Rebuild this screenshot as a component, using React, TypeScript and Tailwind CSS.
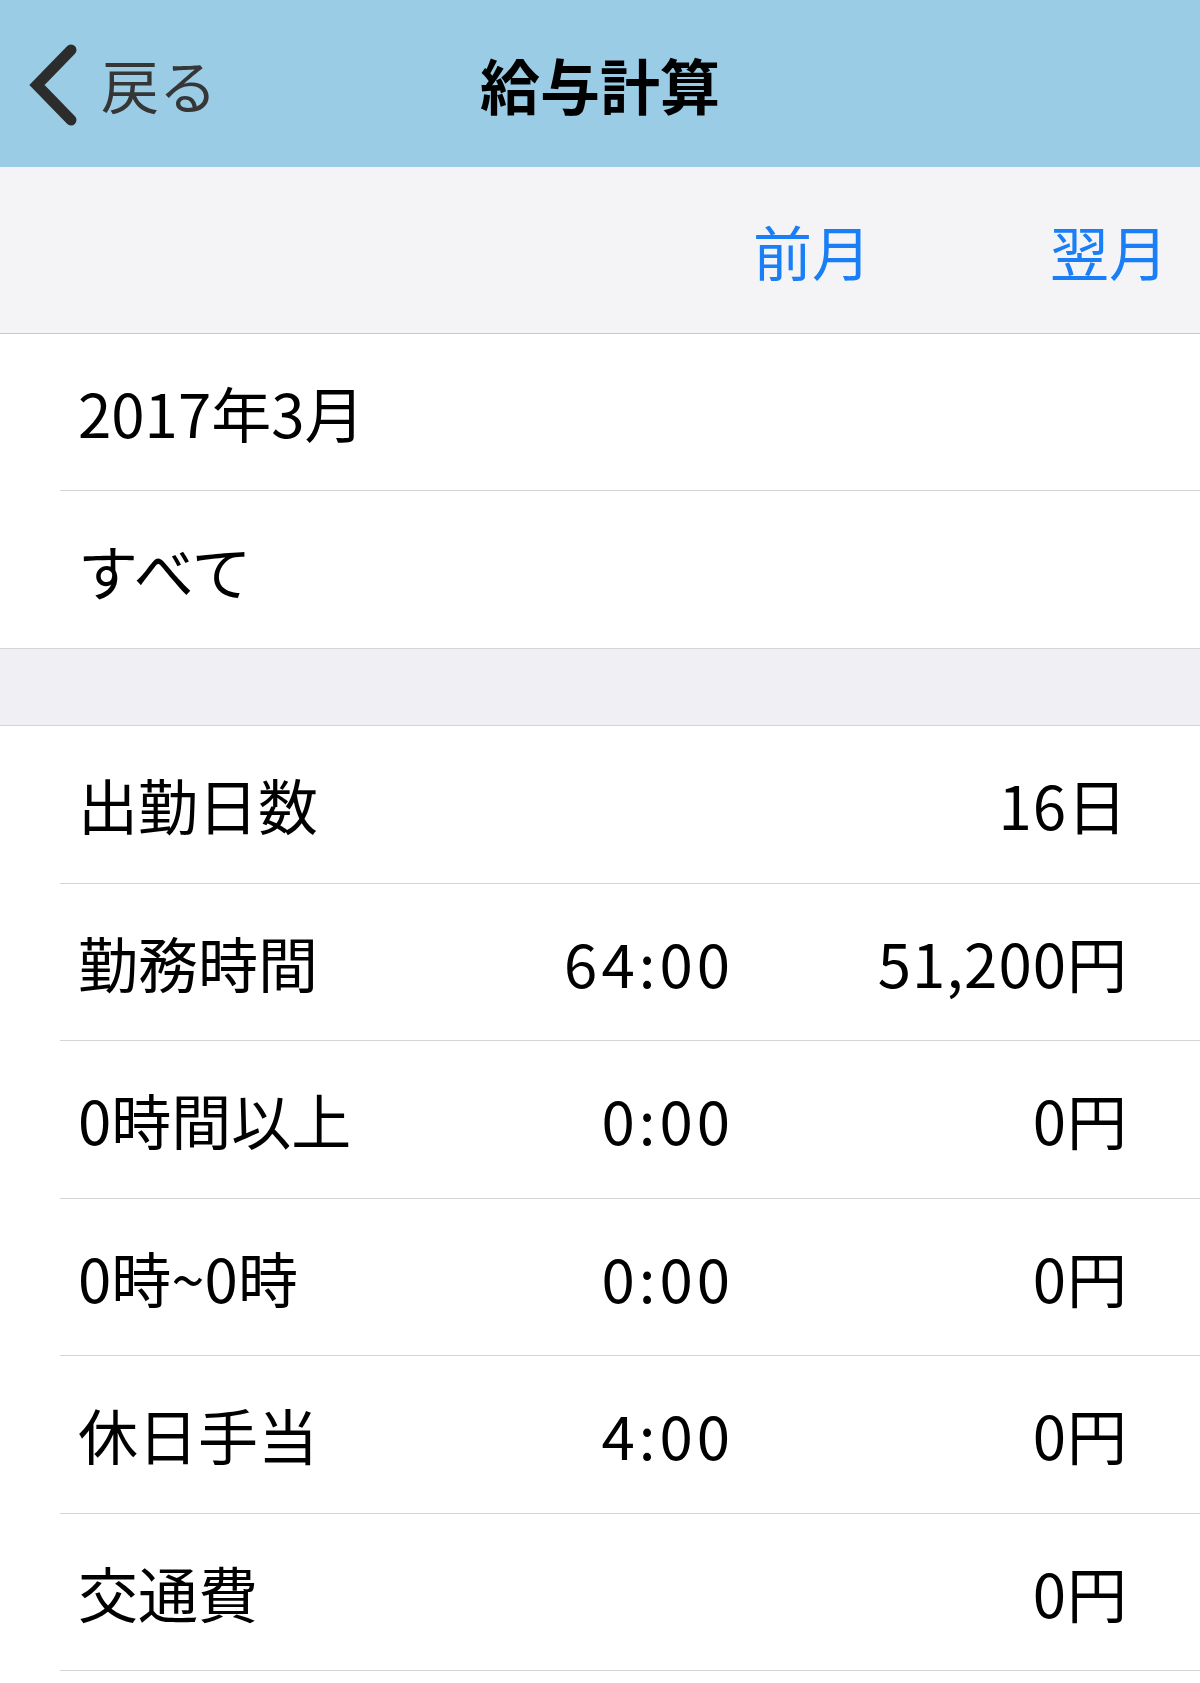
type Row = { label: string; time?: string; amount: string };

const ROWS: Row[] = [
  { label: "出勤日数", amount: "16日" },
  { label: "勤務時間", time: "64:00", amount: "51,200円" },
  { label: "0時間以上", time: "0:00", amount: "0円" },
  { label: "0時~0時", time: "0:00", amount: "0円" },
  { label: "休日手当", time: "4:00", amount: "0円" },
  { label: "交通費", amount: "0円" },
];

const font = "font-['Noto_Sans_CJK_JP','Noto_Sans',sans-serif]";

export default function App() {
  return (
    <div className={`min-h-[1683px] w-full bg-white text-black ${font}`}>
      {/* nav bar */}
      <header className="relative flex h-[167px] items-center justify-center bg-[#9acce6]">
        <button
          type="button"
          className="absolute left-[20px] top-0 flex h-full items-center gap-[17px] text-[#363636]"
        >
          <svg width="64" height="84" viewBox="0 0 64 84" className="text-[#2c2c2c]">
            <path
              d="M51 8 L17 43 L51 78"
              fill="none"
              stroke="currentColor"
              strokeWidth="11"
              strokeLinecap="round"
              strokeLinejoin="miter"
            />
          </svg>
          <span className="text-[58px] leading-none">戻る</span>
        </button>
        <h1 className="text-[60px] font-bold leading-none">給与計算</h1>
      </header>

      {/* month switcher */}
      <div className="flex h-[167px] items-center justify-end gap-[176px] border-b border-[#c8c7cc] bg-[#f4f4f6] pr-[32px] text-[59px] leading-none text-[#1a7ef6]">
        <button type="button" className="-ml-[3px] mr-[3px]">前月</button>
        <button type="button">翌月</button>
      </div>

      {/* selection */}
      <section>
        <div className="ml-[60px] flex h-[157px] items-center border-b border-[#d3d3d8] pl-[18px] text-[60px] leading-none">
          2017年3月
        </div>
        <div className="flex h-[157px] items-center pl-[78px] text-[60px] leading-none">
          すべて
        </div>
      </section>

      <div className="h-[78px] border-y border-[#d3d3d8] bg-[#efeff4]" />

      {/* totals */}
      <section>
        {ROWS.map((row) => (
          <div
            key={row.label}
            className="ml-[60px] flex h-[157.5px] items-center border-b border-[#d3d3d8] pl-[18px] pr-[72px] text-[60px] leading-none"
          >
            <span className="flex-1">{row.label}</span>
            <span className="-mr-[2px] w-[254px] text-right tracking-[4px]">{row.time ?? ""}</span>
            <span className="w-[396px] text-right tracking-[1px]">{row.amount}</span>
          </div>
        ))}
      </section>
    </div>
  );
}
